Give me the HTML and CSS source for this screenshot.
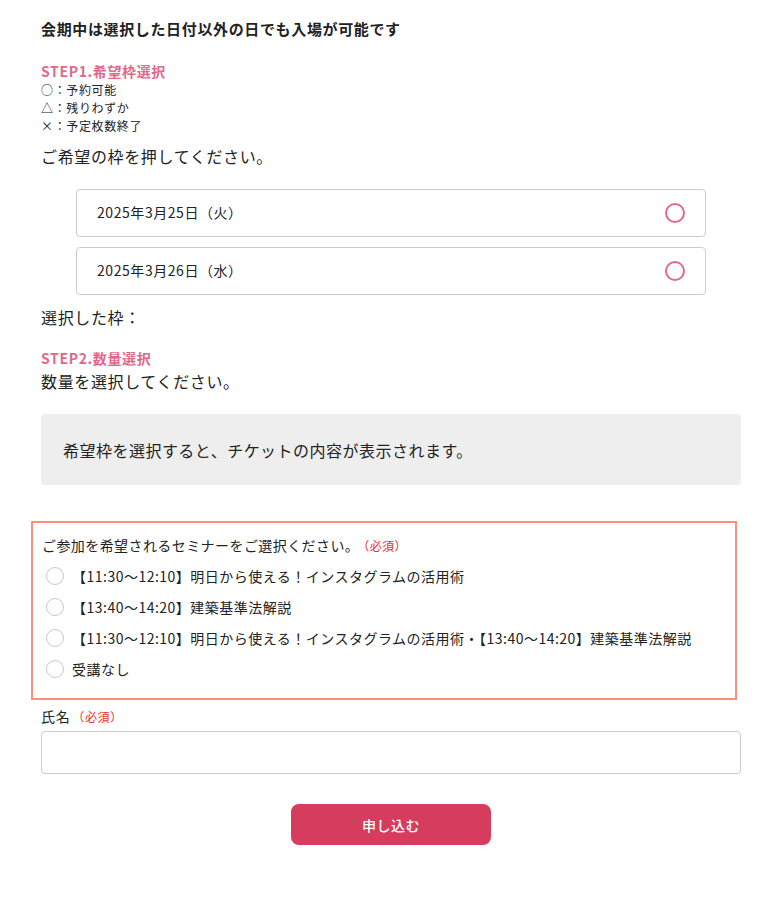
FILE: index.html
```html
<!DOCTYPE html>
<html lang="ja">
<head>
    <meta charset="UTF-8" />
    <title>チケット申込</title>
    <link rel="stylesheet" href="styles.css">
</head>
<body>
    <div class="wrap">
        <p class="notice">会期中は選択した日付以外の日でも入場が可能です</p>

        <h2 class="step step1">STEP1.希望枠選択</h2>
        <ul class="legend">
            <li>○：予約可能</li>
            <li>△：残りわずか</li>
            <li>×：予定枚数終了</li>
        </ul>
        <p class="lead">ご希望の枠を押してください。</p>

        <div class="dates">
            <button type="button" class="date">
                <span>2025年3月25日（火）</span>
                <span class="mark"></span>
            </button>
            <button type="button" class="date">
                <span>2025年3月26日（水）</span>
                <span class="mark"></span>
            </button>
        </div>

        <p class="lead selected">選択した枠：</p>

        <h2 class="step step2">STEP2.数量選択</h2>
        <p class="lead">数量を選択してください。</p>

        <div class="ticket-box">希望枠を選択すると、チケットの内容が表示されます。</div>

        <div class="seminar">
            <p class="q">ご参加を希望されるセミナーをご選択ください。<span class="req">（必須）</span></p>
            <label class="opt"><input type="radio" name="seminar"><span class="dot"></span>【11:30〜12:10】明日から使える！インスタグラムの活用術</label>
            <label class="opt"><input type="radio" name="seminar"><span class="dot"></span>【13:40〜14:20】建築基準法解説</label>
            <label class="opt"><input type="radio" name="seminar"><span class="dot"></span>【11:30〜12:10】明日から使える！インスタグラムの活用術・【13:40〜14:20】建築基準法解説</label>
            <label class="opt"><input type="radio" name="seminar"><span class="dot"></span>受講なし</label>
        </div>

        <label class="name-label" for="shimei">氏名<span class="req">（必須）</span></label>
        <input type="text" id="shimei" class="name-input">

        <div class="submit-row">
            <button type="submit" class="submit">申し込む</button>
        </div>
    </div>
</body>
</html>
```

FILE: styles.css
```css
body {
    margin: 0;
    font-family: 'Noto Sans CJK JP', 'Noto Sans', sans-serif;
    color: #222;
    background: #fff;
    letter-spacing: 0.04em;
}
.wrap {
    width: 700px;
    margin: 0 0 0 41px;
    padding: 17px 0 40px;
}
.notice {
    margin: 0;
    font-size: 15px;
    font-weight: bold;
    line-height: 24px;
}
.step {
    margin: 0;
    font-size: 14px;
    font-weight: bold;
    color: #e0698a;
    line-height: 20px;
}
.step1 {
    margin-top: 20px;
}
.legend {
    list-style: none;
    margin: 0;
    padding: 0;
    font-size: 12px;
    line-height: 18px;
}
.lead {
    margin: 0;
    font-size: 16px;
    line-height: 26px;
}
.legend + .lead {
    margin-top: 8px;
}
.dates {
    display: flex;
    flex-direction: column;
    gap: 10px;
    margin: 20px 35px 9px;
}
.date {
    display: flex;
    justify-content: space-between;
    align-items: center;
    height: 48px;
    padding: 0 20px 3px 20px;
    background: #fff;
    border: 1px solid #ccc;
    border-radius: 4px;
    font-family: inherit;
    font-size: 14px;
    letter-spacing: 0.04em;
    color: #222;
    cursor: pointer;
}
.mark {
    width: 16px;
    height: 16px;
    border: 2px solid #e0698a;
    border-radius: 50%;
    margin-top: 3px;
}
.selected {
    margin-bottom: 18px;
}
.ticket-box {
    margin-top: 20px;
    height: 71px;
    display: flex;
    align-items: center;
    padding: 0 22px;
    background: #eeeeee;
    border-radius: 4px;
    font-size: 16px;
    letter-spacing: 0.03em;
}
.seminar {
    margin: 36px -10px 0 -10px;
    width: 706px;
    box-sizing: border-box;
    border: 2px solid #f7917d;
    padding: 11px 9px 14px;
}
.q {
    margin: 0 0 3px;
    font-size: 14px;
    line-height: 22px;
    letter-spacing: 0.03em;
}
.req {
    color: #ee2b2b;
    font-size: 12px;
    margin-left: 4px;
}
.opt {
    display: flex;
    align-items: center;
    height: 31px;
    font-size: 14px;
    letter-spacing: 0.035em;
    cursor: pointer;
}
.opt input {
    display: none;
}
.dot {
    width: 16px;
    height: 16px;
    border: 1px solid #c8c8c8;
    border-radius: 50%;
    margin: 0 8px 0 4px;
}
.name-label {
    display: block;
    margin-top: 5px;
    font-size: 14px;
    line-height: 22px;
}
.name-label .req {
    margin-left: 2px;
}
.name-input {
    display: block;
    width: 100%;
    height: 43px;
    box-sizing: border-box;
    margin-top: 3px;
    border: 1px solid #ccc;
    border-radius: 4px;
}
.submit-row {
    display: flex;
    justify-content: center;
    margin-top: 30px;
}
.submit {
    width: 200px;
    height: 41px;
    background: #d63c5e;
    color: #fff;
    border: none;
    border-radius: 8px;
    font-family: inherit;
    font-size: 14px;
    font-weight: 500;
    letter-spacing: 0.04em;
    cursor: pointer;
}
```
